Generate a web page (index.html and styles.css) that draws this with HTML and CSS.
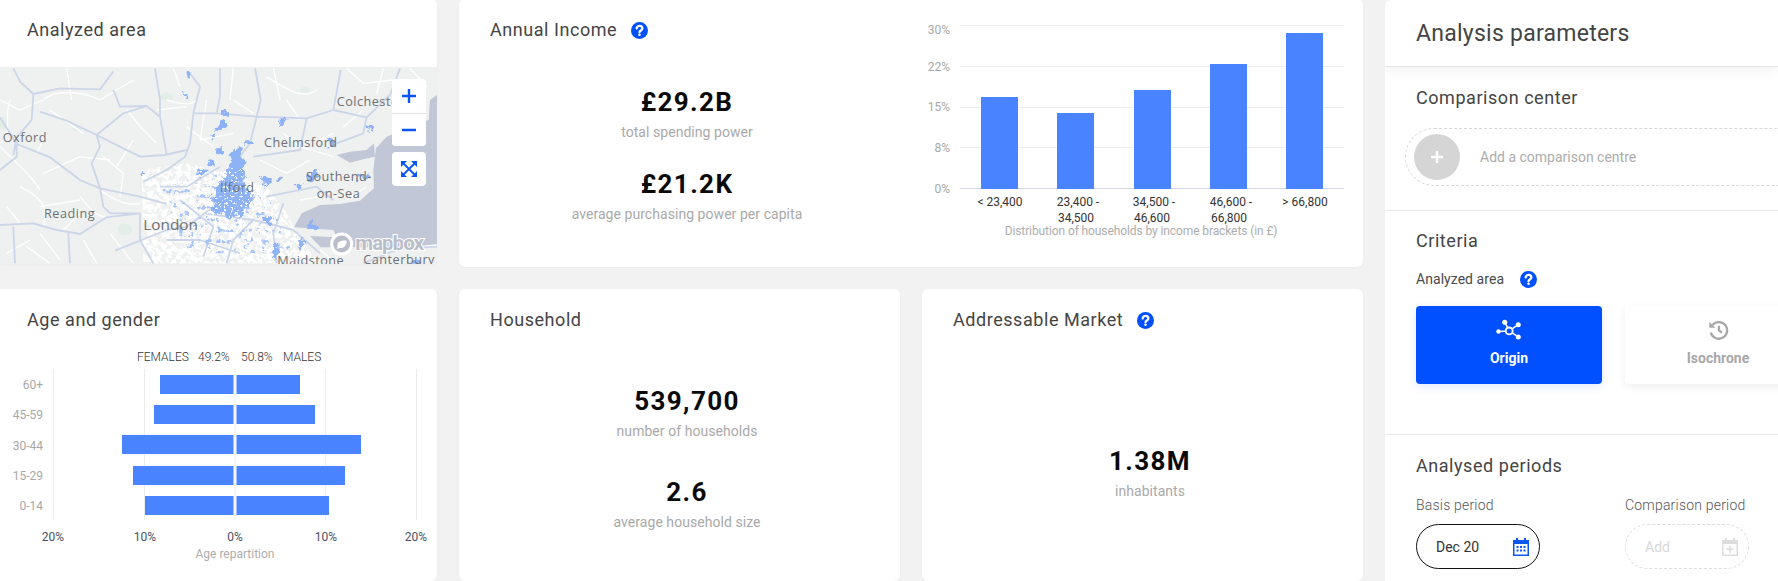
FILE: index.html
```html
<!DOCTYPE html>
<html lang="en">
<head>
<meta charset="utf-8">
<title>Analysis</title>
<link rel="stylesheet" href="styles.css">
</head>
<body>
<div class="page">
  <main class="dashboard">
    <section class="card card-map">
      <h2 class="card-title">Analyzed area</h2>
      <div class="map">
        <svg class="map-svg" viewBox="0 201 1311 591" width="437" height="197">
          <defs>
            <filter id="speck" x="0" y="0" width="100%" height="100%">
              <feTurbulence type="fractalNoise" baseFrequency="0.07" numOctaves="3" seed="7"/>
              <feColorMatrix values="0 0 0 0 0  0 0 0 0 0  0 0 0 0 0  10 0 0 0 -4.4"/>
              <feComposite in="SourceGraphic" operator="in"/>
              <feGaussianBlur stdDeviation="1"/>
            </filter>
            <filter id="speck2" x="0" y="0" width="100%" height="100%">
              <feTurbulence type="fractalNoise" baseFrequency="0.14" numOctaves="2" seed="3"/>
              <feColorMatrix values="0 0 0 0 0  0 0 0 0 0  0 0 0 0 0  10 0 0 0 -5.9"/>
              <feComposite in="SourceGraphic" operator="in"/>
              <feGaussianBlur stdDeviation="1.200"/>
            </filter>
            <filter id="speck3" x="0" y="0" width="100%" height="100%">
              <feTurbulence type="fractalNoise" baseFrequency="0.06" numOctaves="3" seed="11"/>
              <feColorMatrix values="0 0 0 0 0  0 0 0 0 0  0 0 0 0 0  10 0 0 0 -6.2"/>
              <feComposite in="SourceGraphic" operator="in"/>
              <feGaussianBlur stdDeviation="1"/>
            </filter>
            <filter id="rough" x="-20%" y="-20%" width="140%" height="140%">
              <feTurbulence type="fractalNoise" baseFrequency="0.05" numOctaves="3" seed="5" result="n"/>
              <feDisplacementMap in="SourceGraphic" in2="n" scale="34" xChannelSelector="R" yChannelSelector="G"/>
              <feGaussianBlur stdDeviation="1.200"/>
            </filter>
            <filter id="soft"><feGaussianBlur stdDeviation="1.200"/></filter>
          </defs>
          <rect class="land" x="0" y="201" width="1311" height="591"/>
          <g class="park" filter="url(#soft)">
            <ellipse cx="375" cy="688" rx="22" ry="18"/>
            <ellipse cx="230" cy="385" rx="14" ry="10"/>
            <ellipse cx="10" cy="370" rx="14" ry="18"/>
            <ellipse cx="915" cy="270" rx="14" ry="10"/>
            <ellipse cx="500" cy="290" rx="20" ry="12"/>
          </g>
          <g class="water" filter="url(#soft)">
            <path d="M1311 285L1290 300 1286 360 1220 385 1160 410 1128 445 1120 510 1122 565 1080 602 1020 612 960 615 905 640 882 682 1000 690 1010 712 930 708 962 742 1311 742Z"/>
            <path d="M1010 465L1050 455 1100 450 1122 430 1125 470 1080 480 1050 488Z"/>
          </g>
          <g class="minor" filter="url(#soft)">
            <path d="M130 300C160 270 240 270 300 300M200 205L215 300M0 440C40 480 90 520 120 570M130 520L240 470 330 480M60 560C120 590 150 620 130 680M380 330L430 390 470 430M500 300C540 310 570 320 590 300M700 205L690 300M800 230C860 270 910 300 950 270M1040 205L1090 250 1180 240M850 400L900 440 1000 470M600 420L700 400M300 570C340 600 380 620 420 610M20 620L60 670M120 700L180 780M250 720L290 790M1100 560L1040 600M830 640L870 680M240 590C280 640 300 660 350 650M1230 205L1280 260M960 750L1010 790M1200 745L1311 735M0 300L60 330 130 300M140 400L110 460M310 470L370 520 360 590M470 330L560 320M520 205L540 260M620 300L600 420M820 205L840 300M960 420L1000 400M780 480L860 520 930 480M900 600L960 590M20 760L90 720M240 640L190 690M1150 205L1130 280M1030 380L1090 330M300 300L400 240M150 330L250 400M400 420L350 500M30 300C10 350 40 400 0 430M700 300L760 340M860 300L900 360M560 380L640 440M1000 530L1100 520M120 620L240 600M80 740L150 790M330 700L400 790"/>
          </g>
          <path class="white-net" filter="url(#speck)" d="M425 510L560 490 640 510 800 560 860 640 900 720 960 790 430 790Z"/>
          <g class="roads" filter="url(#soft)">
            <path d="M40 205L60 245 100 282 95 360 50 412 40 465M100 282L180 265 300 268 340 215M120 335L200 362 290 405 340 430 420 470 495 465 560 450M290 405L370 340 440 318 480 350M340 270L360 320 440 318M465 205L480 300 480 350 500 465M0 352L50 432 100 452 150 472 240 540 300 565 420 590 500 612M0 510L50 470 50 432M290 405L300 440 275 490 300 565 310 620 330 640 420 640M0 675L100 670 170 690 240 702 320 652 420 640M40 680L45 790M205 700L210 790M345 752L420 722 500 690M570 220L600 260 580 340 570 430 555 470 500 510 430 545M660 205L660 290 650 340 580 340M765 205L782 300 770 350 750 430 720 470M650 340L770 350 920 355 1000 330 1022 210M920 355L900 450 760 470M1000 330L1100 352 1170 285 1200 205M420 640L420 720 460 790M610 640L760 660 880 690 960 760M800 590L950 560 1000 600M640 620L560 680 500 690M760 660L700 720 680 790M850 610L820 700 830 790M1090 790L1200 745 1311 740M1100 350L1090 400 1010 430M660 500L560 560 480 560M540 600L640 680 610 770M500 720L600 720 720 760"/>
          </g>
          <path class="blue-light" filter="url(#speck3)" d="M480 560L640 520 800 580 880 760 560 760Z"/>
          <g class="blue" filter="url(#rough)">
            <path d="M640 635L636 592 660 550 690 500 694 452 720 438 735 490 734 560 762 600 730 640 690 650Z"/>
            <path d="M645 392L662 360 690 372 672 392Z"/>
            <path d="M830 360L860 356 850 380 836 380Z"/>
            <path d="M782 538L808 530 818 550 800 562Z"/>
            <path d="M925 672L935 652 948 680 945 692 925 692Z"/>
            <ellipse cx="565" cy="228" rx="6" ry="13"/>
            <ellipse cx="555" cy="285" rx="4" ry="8"/>
            <ellipse cx="676" cy="340" rx="8" ry="8"/>
            <ellipse cx="640" cy="412" rx="8" ry="6"/>
            <ellipse cx="745" cy="430" rx="10" ry="7"/>
            <ellipse cx="992" cy="425" rx="10" ry="18"/>
            <ellipse cx="1108" cy="382" rx="14" ry="7"/>
            <ellipse cx="897" cy="562" rx="10" ry="12"/>
            <ellipse cx="828" cy="750" rx="9" ry="26"/>
            <ellipse cx="905" cy="730" rx="8" ry="14"/>
            <ellipse cx="802" cy="660" rx="12" ry="12"/>
            <ellipse cx="604" cy="516" rx="9" ry="12"/>
            <ellipse cx="632" cy="490" rx="8" ry="9"/>
            <ellipse cx="428" cy="522" rx="5" ry="7"/>
            <ellipse cx="836" cy="535" rx="10" ry="8"/>
            <ellipse cx="940" cy="530" rx="18" ry="14"/>
            <ellipse cx="1090" cy="530" rx="22" ry="7"/>
            <ellipse cx="1250" cy="785" rx="10" ry="6"/>
            <ellipse cx="660" cy="455" rx="6" ry="14"/>
          </g>
          <path class="white-net" filter="url(#speck2)" d="M620 660L620 570 670 500 740 510 780 610 730 660Z"/>
          <g class="labels">
            <text x="8" y="426">Oxford</text>
            <text x="132" y="655">Reading</text>
            <text class="label-big" x="430" y="690">London</text>
            <text x="660" y="577">Ilford</text>
            <text x="792" y="441">Chelmsford</text>
            <text x="1010" y="317">Colchester</text>
            <text x="918" y="544">Southend-</text>
            <text x="950" y="594">on-Sea</text>
            <text x="832" y="796">Maidstone</text>
            <text x="1090" y="792">Canterbury</text>
          </g>
          <g class="logo">
            <circle cx="1025" cy="732" r="30"/>
            <path class="logo-mark" d="M1012 738C1012 725 1024 720 1040 722 1040 738 1030 746 1018 744L1012 748Z"/>
            <text x="1066" y="750" textLength="206">mapbox</text>
          </g>
        </svg>
        <div class="map-controls">
          <div class="ctrl-group">
            <button class="ctrl-btn" aria-label="Zoom in"><svg viewBox="0 0 16 16" width="16" height="16"><path class="ctrl-icon" d="M1 8h14M8 1v14"/></svg></button>
            <button class="ctrl-btn" aria-label="Zoom out"><svg viewBox="0 0 16 16" width="16" height="16"><path class="ctrl-icon" d="M1 8h14"/></svg></button>
          </div>
          <div class="ctrl-group">
            <button class="ctrl-btn" aria-label="Fullscreen"><svg viewBox="0 0 18 18" width="18" height="18"><path class="ctrl-icon-thin" d="M3 3l12 12M15 3L3 15"/><path class="ctrl-fill" d="M1 1h6L1 7ZM17 1v6l-6-6ZM1 17v-6l6 6ZM17 17h-6l6-6Z"/></svg></button>
          </div>
        </div>
      </div>
    </section>

    <section class="card card-income">
      <div class="income-left">
        <h2 class="card-title">Annual Income
          <svg class="help" viewBox="0 0 24 24" width="17" height="17"><circle class="help-bg" cx="12" cy="12" r="12"/><path class="help-q" d="M8 9.2C8 6.8 10 5.600 12 5.600s4 1.200 4 3.400c0 3-4 2.800-4 5.600"/><circle class="help-dot" cx="12" cy="18" r="1.800"/></svg>
        </h2>
        <div class="stats stats-income">
          <div class="stat"><div class="stat-value">£29.2B</div><div class="stat-label">total spending power</div></div>
          <div class="stat"><div class="stat-value">£21.2K</div><div class="stat-label">average purchasing power per capita</div></div>
        </div>
      </div>
      <svg class="income-chart" viewBox="915 -1 448 268" width="448" height="268">
        <g class="grid">
          <line x1="960" x2="1344" y1="25.500" y2="25.500"/>
          <line x1="960" x2="1344" y1="66.500" y2="66.500"/>
          <line x1="960" x2="1344" y1="107.500" y2="107.500"/>
          <line x1="960" x2="1344" y1="147.500" y2="147.500"/>
        </g>
        <line class="axis" x1="960" x2="1344" y1="188.500" y2="188.500"/>
        <g class="bars">
          <rect x="981" y="97" width="37" height="92"/>
          <rect x="1057" y="113" width="37" height="76"/>
          <rect x="1134" y="90" width="37" height="99"/>
          <rect x="1210" y="64" width="37" height="125"/>
          <rect x="1286" y="33" width="37" height="156"/>
        </g>
        <g class="y-labels">
          <text x="950" y="34">30%</text>
          <text x="950" y="71">22%</text>
          <text x="950" y="111">15%</text>
          <text x="950" y="152">8%</text>
          <text x="950" y="193">0%</text>
        </g>
        <g class="x-labels">
          <text x="1000" y="206">&lt; 23,400</text>
          <text x="1078" y="206">23,400 -</text><text x="1076" y="222">34,500</text>
          <text x="1154" y="206">34,500 -</text><text x="1152" y="222">46,600</text>
          <text x="1231" y="206">46,600 -</text><text x="1229" y="222">66,800</text>
          <text x="1305" y="206">&gt; 66,800</text>
        </g>
        <text class="caption chart-caption" x="1141" y="235">Distribution of households by income brackets (in £)</text>
      </svg>
    </section>

    <section class="card card-age">
      <h2 class="card-title">Age and gender</h2>
      <svg class="age-chart" viewBox="-4 345 441 236" width="441" height="236">
        <g class="grid">
          <line x1="53.500" x2="53.500" y1="369" y2="520"/>
          <line x1="144.500" x2="144.500" y1="369" y2="520"/>
          <line x1="235" x2="235" y1="369" y2="520"/>
          <line x1="325.500" x2="325.500" y1="369" y2="520"/>
          <line x1="416.500" x2="416.500" y1="369" y2="520"/>
        </g>
        <g class="bars">
          <rect x="160" y="375" width="73.500" height="19"/><rect x="236.500" y="375" width="63.500" height="19"/>
          <rect x="154" y="405" width="79.500" height="19"/><rect x="236.500" y="405" width="78.500" height="19"/>
          <rect x="122" y="435" width="111.500" height="19"/><rect x="236.500" y="435" width="124.500" height="19"/>
          <rect x="133" y="466" width="100.500" height="19"/><rect x="236.500" y="466" width="108.500" height="19"/>
          <rect x="145" y="496" width="88.500" height="19"/><rect x="236.500" y="496" width="92.500" height="19"/>
        </g>
        <g class="legend">
          <text x="137" y="361">FEMALES</text>
          <text x="198" y="361">49.2%</text>
          <text x="241" y="361">50.8%</text>
          <text x="283" y="361">MALES</text>
        </g>
        <g class="y-labels">
          <text x="43" y="389">60+</text>
          <text x="43" y="419">45-59</text>
          <text x="43" y="450">30-44</text>
          <text x="43" y="480">15-29</text>
          <text x="43" y="510">0-14</text>
        </g>
        <g class="pct-labels">
          <text x="53" y="541">20%</text>
          <text x="145" y="541">10%</text>
          <text x="235" y="541">0%</text>
          <text x="326" y="541">10%</text>
          <text x="416" y="541">20%</text>
        </g>
        <text class="caption" x="235" y="558">Age repartition</text>
      </svg>
    </section>

    <section class="card">
      <h2 class="card-title">Household</h2>
      <div class="stats stats-household">
        <div class="stat"><div class="stat-value">539,700</div><div class="stat-label">number of households</div></div>
        <div class="stat"><div class="stat-value">2.6</div><div class="stat-label">average household size</div></div>
      </div>
    </section>

    <section class="card">
      <h2 class="card-title">Addressable Market
        <svg class="help" viewBox="0 0 24 24" width="17" height="17"><circle class="help-bg" cx="12" cy="12" r="12"/><path class="help-q" d="M8 9.2C8 6.8 10 5.600 12 5.600s4 1.200 4 3.400c0 3-4 2.800-4 5.600"/><circle class="help-dot" cx="12" cy="18" r="1.800"/></svg>
      </h2>
      <div class="stats stats-market">
        <div class="stat"><div class="stat-value">1.38M</div><div class="stat-label">inhabitants</div></div>
      </div>
    </section>
  </main>

  <aside class="panel">
    <header class="panel-header"><h1 class="panel-title">Analysis parameters</h1></header>

    <section class="panel-section section-center">
      <h3 class="section-title">Comparison center</h3>
      <div class="add-center">
        <span class="add-circle"><svg viewBox="0 0 16 16" width="16" height="16"><path class="add-plus" d="M8 2v12M2 8h12"/></svg></span>
        <span class="add-text">Add a comparison centre</span>
      </div>
    </section>

    <section class="panel-section section-criteria">
      <h3 class="section-title">Criteria</h3>
      <div class="field-label criteria-label">Analyzed area
        <svg class="help" viewBox="0 0 24 24" width="17" height="17"><circle class="help-bg" cx="12" cy="12" r="12"/><path class="help-q" d="M8 9.2C8 6.8 10 5.600 12 5.600s4 1.200 4 3.400c0 3-4 2.800-4 5.600"/><circle class="help-dot" cx="12" cy="18" r="1.800"/></svg>
      </div>
      <div class="choices">
        <button class="choice choice-active">
          <svg viewBox="375 90 85 70" width="28" height="23"><g class="origin-lines"><path d="M418 128L404 100M418 128L447 108M418 128L447 147M418 128L384 130"/><circle class="origin-ring" cx="418" cy="128" r="11"/></g><circle class="origin-node" cx="404" cy="100" r="8"/><circle class="origin-node" cx="447" cy="108" r="8"/><circle class="origin-node" cx="447" cy="147" r="8"/><circle class="origin-node" cx="384" cy="130" r="7"/></svg>
          <span>Origin</span>
        </button>
        <button class="choice">
          <svg viewBox="0 0 24 24" width="21" height="21"><path class="history-line" d="M5.200 6.200A9.500 9.500 0 1 1 3.200 15"/><path class="history-arrow" d="M1.500 2.500L1.500 9.500 8.500 9.500Z"/><path class="history-line" d="M12.500 7v5.500l3.500 2.500"/></svg>
          <span>Isochrone</span>
        </button>
      </div>
    </section>

    <section class="panel-section section-periods">
      <h3 class="section-title">Analysed periods</h3>
      <div class="periods">
        <div class="period">
          <div class="field-label period-label">Basis period</div>
          <div class="pill">
            <span>Dec 20</span>
            <svg viewBox="0 0 16 18" width="16" height="18"><path class="cal-fill" d="M3 0h2v2h6V0h2v2h3v16H0V2h3Z"/><rect class="cal-inner" x="1.500" y="6" width="13" height="10.500"/><path class="cal-fill" d="M3.500 8h2v2h-2zM7 8h2v2H7zM10.500 8h2v2h-2zM3.500 11.500h2v2h-2zM7 11.500h2v2H7zM10.500 11.500h2v2h-2z"/></svg>
          </div>
        </div>
        <div class="period">
          <div class="field-label period-label">Comparison period</div>
          <div class="pill pill-empty">
            <span>Add</span>
            <svg viewBox="0 0 16 18" width="16" height="18"><path class="cal-empty" d="M3 0h2v2h6V0h2v2h3v16H0V2h3Z"/><rect class="cal-inner" x="1.500" y="6" width="13" height="10.500"/><path class="cal-empty" d="M7.300 7.500h1.400v3h3v1.400h-3v3H7.300v-3h-3v-1.400h3z"/></svg>
          </div>
        </div>
      </div>
    </section>
  </aside>
</div>
</body>
</html>
```
FILE: styles.css
```css
* { box-sizing: border-box; }
html, body { margin: 0; height: 100%; overflow: hidden; }
body { background: #f2f2f2; font-family: Roboto, "Liberation Sans", sans-serif; color: #444; }
h1, h2, h3 { margin: 0; font-weight: 400; }
button { font-family: inherit; border: 0; padding: 0; }

.page { display: flex; height: 581px; width: 1778px; }

.dashboard {
  display: grid;
  grid-template-columns: 441px 441px 441px;
  grid-template-rows: 268px 1fr;
  column-gap: 22px;
  row-gap: 22px;
  width: 1367px;
  margin: -1px 0 0 -4px;
  height: 582px;
  flex: none;
}

.card { background: #fff; border-radius: 6px; box-shadow: 0 1px 3px rgba(0,0,0,.03); overflow: hidden; }
.card-title {
  display: flex;
  align-items: center;
  gap: 14px;
  height: 56px;
  padding: 19px 31px 13px;
  font-size: 18px;
  line-height: 24px;
  letter-spacing: .55px;
  color: #444;
}

.card-map { height: 265px; align-self: start; }
.card-map .card-title { height: 68px; padding-bottom: 25px; }
.map { position: relative; height: 197px; margin-left: 4px; overflow: hidden; }
.map-svg { display: block; }
.land { fill: #eff0f0; }
.park { fill: #e4eee8; }
.water { fill: #c1c7d6; }
.roads { fill: none; stroke: #cdd6e9; stroke-width: 5.500; stroke-linejoin: round; }
.minor { fill: none; stroke: #fff; stroke-width: 4; }
.white-net { fill: #fff; }
.blue { fill: #8eb2f6; }
.blue-light { fill: #a9c4f7; }
.labels text { font-family: "Open Sans", Roboto, sans-serif; font-size: 38px; letter-spacing: 1.500px; fill: #6c7074; }
.labels .label-big { font-size: 46px; letter-spacing: 0; }
.logo circle { fill: #b9bdca; stroke: #fff; stroke-width: 9; }
.logo .logo-mark { fill: #fff; }
.logo text { font-family: Roboto, sans-serif; font-size: 62px; font-weight: 700; fill: #b9bdca; stroke: #fff; stroke-width: 6; paint-order: stroke; }

.map-controls { position: absolute; top: 12px; right: 11px; display: flex; flex-direction: column; gap: 6px; }
.ctrl-group { background: #fff; border-radius: 4px; overflow: hidden; width: 34px; display: flex; flex-direction: column; }
.ctrl-btn { display: flex; align-items: center; justify-content: center; width: 34px; height: 34px; background: #fff; }
.ctrl-btn + .ctrl-btn { height: 33px; border-top: 1px solid #e2e2e2; }
.ctrl-icon { fill: none; stroke: #0b55f0; stroke-width: 2.400; }
.ctrl-icon-thin { fill: none; stroke: #0b55f0; stroke-width: 1.800; }
.ctrl-fill { fill: #0b55f0; }

.card-income { grid-column: 2 / span 2; display: flex; }
.income-left { width: 456px; flex: none; }
.income-chart { display: block; flex: none; }

.grid line { stroke: #ececec; stroke-width: 1; }
.axis { stroke: #d5d8e0; stroke-width: 1; }
.bars rect { fill: #4a83ff; }
.y-labels text { font-size: 12px; fill: #a8a8a8; text-anchor: end; }
.x-labels text { font-size: 12px; fill: #333; text-anchor: middle; }
.caption { font-size: 12px; fill: #adadad; text-anchor: middle; }
.chart-caption { letter-spacing: -.1px; }
.legend text { font-size: 12px; font-weight: 300; fill: #333; }
.pct-labels text { font-size: 12px; fill: #4a4f66; text-anchor: middle; }
.age-chart { display: block; }

.help { flex: none; }
.help-bg { fill: #0050ff; }
.help-q { fill: none; stroke: #fff; stroke-width: 3.200; stroke-linecap: round; }
.help-dot { fill: #fff; }

.stats { display: flex; flex-direction: column; align-items: center; text-align: center; }
.stat-value { font-size: 26px; line-height: 30px; font-weight: 700; letter-spacing: 1.400px; color: #0a0a0a; }
.stat-label { font-size: 14px; line-height: 20px; margin-top: 5px; letter-spacing: .05px; color: #a9a9a9; }
.stats-income { padding-top: 32px; gap: 27px; }
.stats-household { padding: 41px 0 0 15px; gap: 36px; }
.stats-market { padding: 101px 0 0 15px; }

.panel {
  flex: none;
  width: 393px;
  height: 581px;
  margin-left: 22px;
  background: #fff;
  border-radius: 6px 0 0 0;
  overflow: hidden;
  box-shadow: 0 1px 3px rgba(0,0,0,.03);
}
.panel-header { height: 67px; padding: 0 31px; display: flex; align-items: center; border-bottom: 1px solid #e5e5e5; box-shadow: 0 4px 12px rgba(0,0,0,.05); position: relative; }
.panel-title { font-size: 23px; letter-spacing: .25px; color: #444; }
.panel-section { padding-left: 31px; border-bottom: 1px solid #e9e9e9; }
.section-title { font-size: 18px; line-height: 24px; letter-spacing: .55px; color: #444; }
.section-center { height: 144px; padding-top: 19px; }
.add-center {
  display: flex;
  align-items: center;
  gap: 20px;
  margin: 18px -60px 0 -11px;
  height: 58px;
  padding-left: 8px;
  border: 1px dashed #d8d8d8;
  border-radius: 29px;
}
.add-circle { width: 46px; height: 46px; border-radius: 50%; background: #d5d5d5; display: flex; align-items: center; justify-content: center; flex: none; }
.add-plus { fill: none; stroke: #fff; stroke-width: 2.500; }
.add-text { font-size: 14px; color: #acacac; }

.section-criteria { height: 224px; padding-top: 18px; }
.field-label { font-size: 14px; line-height: 20px; color: #4a4a4a; }
.criteria-label { display: flex; align-items: center; gap: 16px; margin-top: 16px; letter-spacing: .05px; }
.choices { display: flex; gap: 23px; margin-top: 17px; }
.choice {
  flex: none;
  width: 186px;
  height: 78px;
  border-radius: 4px;
  background: #fff;
  color: #a8a8a8;
  font-size: 14px;
  font-weight: 700;
  display: flex;
  flex-direction: column;
  align-items: center;
  justify-content: flex-start;
  gap: 9px;
  padding-top: 13px;
  box-shadow: 0 3px 10px rgba(0,0,0,.07);
}
.choice svg { height: 22px; }
.choice-active { background: #0050ff; color: #fff; box-shadow: 0 3px 10px rgba(0,80,255,.12); }
.origin-lines path { fill: none; stroke: #fff; stroke-width: 5; }
.origin-ring { fill: #0050ff; stroke: #fff; stroke-width: 6; }
.origin-node { fill: #fff; }
.history-line { fill: none; stroke: #a8a8a8; stroke-width: 2.600; }
.history-arrow { fill: #a8a8a8; }

.section-periods { border-bottom: 0; padding-top: 19px; }
.periods { display: flex; gap: 85px; margin-top: 17px; }
.period { flex: none; width: 124px; }
.period-label { font-weight: 300; letter-spacing: .2px; color: #555; white-space: nowrap; }
.pill { display: flex; align-items: center; justify-content: space-between; width: 124px; height: 45px; margin-top: 9px; padding: 0 10px 0 19px; border: 1.500px solid #111; border-radius: 23px; font-size: 14px; color: #333; }
.pill-empty { border: 1.500px dashed #ddd; color: #d8d8d8; }
.cal-fill { fill: #0b55f0; }
.cal-empty { fill: #dcdcdc; }
.cal-inner { fill: #fff; }
```
